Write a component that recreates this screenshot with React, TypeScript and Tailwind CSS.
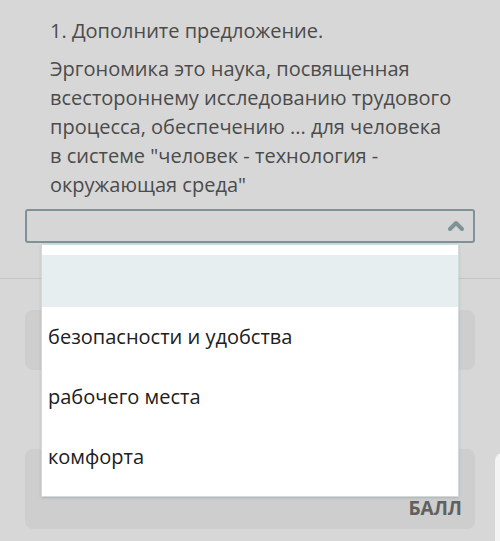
import { ChevronUp } from 'lucide-react';

const options = ['безопасности и удобства', 'рабочего места', 'комфорта'];

export default function App() {
  return (
    <div className="relative h-[541px] w-[500px] overflow-hidden bg-[#d7d7d7] font-['Open_Sans',sans-serif]">
      {/* Question */}
      <div className="border-b border-[#c4c4c4] px-[25px] pt-[16px] pb-[35px]">
        <div className="pl-[25px] text-[20px] leading-[29px] text-[#4b4b4b]">
          <p className="mb-[9px]">1. Дополните предложение.</p>
          <p className="whitespace-nowrap">
            Эргономика это наука, посвященная
            <br />
            всестороннему исследованию трудового
            <br />
            процесса, обеспечению ... для человека
            <br />
            в системе "человек - технология -
            <br />
            окружающая среда"
          </p>
        </div>
        <div className="mt-[10px] flex h-[34px] items-center justify-end rounded-[3px] border-2 border-[#7e9297] bg-[#d6d6d6] pr-[5px]">
          <ChevronUp className="h-[24px] w-[24px] text-[#7e9297]" strokeWidth={4} />
        </div>
      </div>

      {/* Cards below */}
      <div className="flex flex-col gap-[79px] px-[25px] pt-[31px]">
        <div className="h-[60px] rounded-[8px] bg-[#cecece]" />
        <div className="flex h-[80px] items-end justify-end rounded-[8px] bg-[#cecece] px-[13px] pb-[11px]">
          <span className="text-[19px] font-bold leading-none text-[#606060]">БАЛЛ</span>
        </div>
      </div>

      {/* White panel at right edge */}
      <div className="absolute left-[495px] top-[453px] h-[100px] w-[30px] rounded-tl-[8px] bg-[#f4f4f4]" />

      {/* Open dropdown */}
      <div className="absolute left-[41px] top-[244px] w-[418px] border border-[#d0dcdc] bg-white pt-[10px] pb-[9px] shadow-sm">
        <div className="h-[52px] bg-[#e7eef0]" />
        {options.map((o) => (
          <div key={o} className="flex h-[60px] items-center px-[6px] text-[20px] text-[#202020]">
            {o}
          </div>
        ))}
      </div>
    </div>
  );
}
